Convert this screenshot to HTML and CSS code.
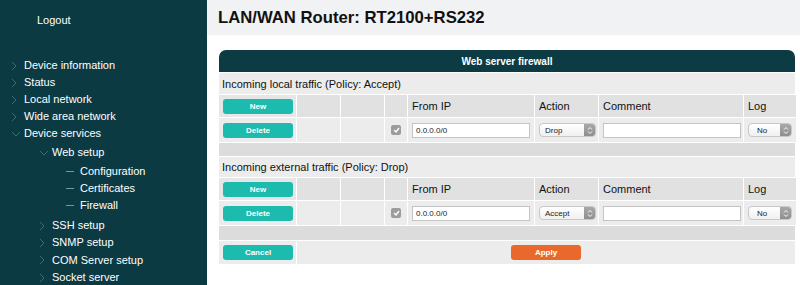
FILE: index.html
```html
<!DOCTYPE html>
<html>
<head>
<meta charset="utf-8">
<link rel="stylesheet" href="styles.css">
</head>
<body>
<div class="page">
  <aside class="sidebar">
    <div class="logout">Logout</div>
    <ul class="menu">
      <li class="item"><span class="chev"><svg width="6" height="10" viewBox="0 0 6 10"><polyline points="1,1 5,5 1,9" fill="none" stroke="#3d6c75" stroke-width="1"/></svg></span>Device information</li>
      <li class="item"><span class="chev"><svg width="6" height="10" viewBox="0 0 6 10"><polyline points="1,1 5,5 1,9" fill="none" stroke="#3d6c75" stroke-width="1"/></svg></span>Status</li>
      <li class="item"><span class="chev"><svg width="6" height="10" viewBox="0 0 6 10"><polyline points="1,1 5,5 1,9" fill="none" stroke="#3d6c75" stroke-width="1"/></svg></span>Local network</li>
      <li class="item"><span class="chev"><svg width="6" height="10" viewBox="0 0 6 10"><polyline points="1,1 5,5 1,9" fill="none" stroke="#3d6c75" stroke-width="1"/></svg></span>Wide area network</li>
      <li class="item"><span class="chev"><svg width="10" height="6" viewBox="0 0 10 6"><polyline points="1,1 5,5 9,1" fill="none" stroke="#3d6c75" stroke-width="1"/></svg></span>Device services</li>
      <li>
        <ul class="sub">
          <li class="item"><span class="chev"><svg width="10" height="6" viewBox="0 0 10 6"><polyline points="1,1 5,5 9,1" fill="none" stroke="#3d6c75" stroke-width="1"/></svg></span>Web setup</li>
          <li>
            <ul class="sub2">
              <li class="item"><span class="dash"></span>Configuration</li>
              <li class="item"><span class="dash"></span>Certificates</li>
              <li class="item"><span class="dash"></span>Firewall</li>
            </ul>
          </li>
          <li class="item"><span class="chev"><svg width="6" height="10" viewBox="0 0 6 10"><polyline points="1,1 5,5 1,9" fill="none" stroke="#3d6c75" stroke-width="1"/></svg></span>SSH setup</li>
          <li class="item"><span class="chev"><svg width="6" height="10" viewBox="0 0 6 10"><polyline points="1,1 5,5 1,9" fill="none" stroke="#3d6c75" stroke-width="1"/></svg></span>SNMP setup</li>
          <li class="item"><span class="chev"><svg width="6" height="10" viewBox="0 0 6 10"><polyline points="1,1 5,5 1,9" fill="none" stroke="#3d6c75" stroke-width="1"/></svg></span>COM Server setup</li>
          <li class="item"><span class="chev"><svg width="6" height="10" viewBox="0 0 6 10"><polyline points="1,1 5,5 1,9" fill="none" stroke="#3d6c75" stroke-width="1"/></svg></span>Socket server</li>
        </ul>
      </li>
    </ul>
  </aside>
  <main class="main">
    <header class="topbar"><h1 class="title">LAN/WAN Router: RT2100+RS232</h1></header>
    <section class="panel">
      <div class="panel-head">Web server firewall</div>
      <div class="rows">
        <div class="row-title first">Incoming local traffic (Policy: Accept)</div>
        <div class="grid head">
          <div class="cell"><button class="btn teal">New</button></div>
          <div class="cell"></div>
          <div class="cell"></div>
          <div class="cell"></div>
          <div class="cell label">From IP</div>
          <div class="cell label">Action</div>
          <div class="cell label">Comment</div>
          <div class="cell label">Log</div>
        </div>
        <div class="grid data">
          <div class="cell"><button class="btn teal">Delete</button></div>
          <div class="cell"></div>
          <div class="cell"></div>
          <div class="cell center"><span class="check"><svg width="7" height="6" viewBox="0 0 7 6"><polyline points="1,3 3,5 6,1" fill="none" stroke="#fff" stroke-width="1.4"/></svg></span></div>
          <div class="cell"><div class="input">0.0.0.0/0</div></div>
          <div class="cell"><div class="select w-action"><span class="sel-text">Drop</span><span class="sel-arrow"><svg width="6" height="9" viewBox="0 0 6 9"><polyline points="1,3.5 3,1.5 5,3.5" fill="none" stroke="#fff" stroke-width="1"/><polyline points="1,5.5 3,7.5 5,5.5" fill="none" stroke="#fff" stroke-width="1"/></svg></span></div></div>
          <div class="cell"><div class="input"></div></div>
          <div class="cell"><div class="select w-log"><span class="sel-text">No</span><span class="sel-arrow"><svg width="6" height="9" viewBox="0 0 6 9"><polyline points="1,3.5 3,1.5 5,3.5" fill="none" stroke="#fff" stroke-width="1"/><polyline points="1,5.5 3,7.5 5,5.5" fill="none" stroke="#fff" stroke-width="1"/></svg></span></div></div>
        </div>
        <div class="spacer"></div>
        <div class="row-title">Incoming external traffic (Policy: Drop)</div>
        <div class="grid head">
          <div class="cell"><button class="btn teal">New</button></div>
          <div class="cell"></div>
          <div class="cell"></div>
          <div class="cell"></div>
          <div class="cell label">From IP</div>
          <div class="cell label">Action</div>
          <div class="cell label">Comment</div>
          <div class="cell label">Log</div>
        </div>
        <div class="grid data">
          <div class="cell"><button class="btn teal">Delete</button></div>
          <div class="cell"></div>
          <div class="cell"></div>
          <div class="cell center"><span class="check"><svg width="7" height="6" viewBox="0 0 7 6"><polyline points="1,3 3,5 6,1" fill="none" stroke="#fff" stroke-width="1.4"/></svg></span></div>
          <div class="cell"><div class="input">0.0.0.0/0</div></div>
          <div class="cell"><div class="select w-action"><span class="sel-text">Accept</span><span class="sel-arrow"><svg width="6" height="9" viewBox="0 0 6 9"><polyline points="1,3.5 3,1.5 5,3.5" fill="none" stroke="#fff" stroke-width="1"/><polyline points="1,5.5 3,7.5 5,5.5" fill="none" stroke="#fff" stroke-width="1"/></svg></span></div></div>
          <div class="cell"><div class="input"></div></div>
          <div class="cell"><div class="select w-log"><span class="sel-text">No</span><span class="sel-arrow"><svg width="6" height="9" viewBox="0 0 6 9"><polyline points="1,3.5 3,1.5 5,3.5" fill="none" stroke="#fff" stroke-width="1"/><polyline points="1,5.5 3,7.5 5,5.5" fill="none" stroke="#fff" stroke-width="1"/></svg></span></div></div>
        </div>
        <div class="spacer tall"></div>
        <div class="actions">
          <div class="cell"><button class="btn teal">Cancel</button></div>
          <div class="cell center"><button class="btn orange">Apply</button></div>
        </div>
      </div>
    </section>
  </main>
</div>
</body>
</html>
```

FILE: styles.css
```css
* { box-sizing: border-box; }
html, body { margin: 0; padding: 0; }
body {
  font-family: "Liberation Sans", Arial, Helvetica, sans-serif;
  background: #fff;
  width: 800px;
  height: 285px;
  overflow: hidden;
}
.page { display: flex; height: 285px; }

.sidebar {
  width: 207px;
  flex: none;
  background: #0c3a43;
  color: #fff;
  font-size: 11px;
  padding-top: 13px;
}
.logout { padding-left: 37px; line-height: 14px; }
.menu, .sub, .sub2 { list-style: none; margin: 0; padding: 0; }
.menu { margin-top: 30px; }
.item {
  display: flex;
  align-items: center;
  line-height: 17px;
  height: 17px;
}
.menu > .item { padding-left: 24px; }
.sub { padding-top: 2px; }
.sub > .item { padding-left: 52px; }
.sub > .item + .item { height: 17.5px; }
.sub2 { padding: 2px 0 3px 0; }
.sub2 > .item { padding-left: 80px; }
.chev {
  width: 12px;
  margin-left: -13px;
  margin-right: 1px;
  display: flex;
  align-items: center;
  justify-content: flex-start;
}
.dash {
  width: 8px;
  height: 1px;
  background: #6f9aa1;
  margin-left: -14px;
  margin-right: 6px;
}

.main { flex: 1; display: flex; flex-direction: column; }
.topbar {
  height: 35px;
  background: #f1f2f4;
  padding-left: 11px;
  display: flex;
  align-items: center;
}
.title {
  margin: 0;
  font-size: 16.7px;
  font-weight: bold;
  color: #111;
}
.panel {
  margin: 15px 0 0 12px;
  width: 576px;
}
.panel-head {
  height: 22px;
  background: #0c3b44;
  border-radius: 7px 7px 0 0;
  color: #fff;
  font-size: 10px;
  font-weight: bold;
  display: flex;
  align-items: center;
  justify-content: center;
}
.rows { display: flex; flex-direction: column; gap: 1px; padding-top: 1px; }
.row-title {
  height: 20px;
  background: #ececec;
  font-size: 11px;
  color: #111;
  display: flex;
  align-items: center;
  padding-left: 3px;
}
.row-title.first { height: 21px; }
.grid {
  display: grid;
  grid-template-columns: 77px 43px 43px 22px 126px 63px 144px 52px;
  column-gap: 1px;
}
.head { height: 22px; }
.data { height: 24px; }
.cell {
  background: #ececec;
  display: flex;
  align-items: center;
  padding-left: 3px;
}
.head .cell { background: #e1e1e1; }
.head .cell:first-child { background: #e6e6e6; }
.data .cell { background: #ececec; }
.label { font-size: 11px; color: #111; padding-left: 4px; }
.center { justify-content: center; padding-left: 0; }
.spacer { height: 13px; background: #dcdcdc; }
.spacer.tall { height: 14px; }
.actions {
  display: grid;
  grid-template-columns: 77px 498px;
  column-gap: 1px;
  height: 23px;
}
.btn {
  border: none;
  font-family: inherit;
  font-size: 8px;
  font-weight: bold;
  color: #fff;
  width: 70px;
  height: 15px;
  border-radius: 3px;
  padding: 0;
  margin-left: 1px;
}
.teal { background: #1dbbad; }
.orange { background: #e8692b; margin-left: 0; }
.check {
  width: 10px;
  height: 10px;
  border-radius: 2px;
  background: #9c9c9c;
  display: flex;
  align-items: center;
  justify-content: center;
}
.input {
  width: 118px;
  height: 15px;
  background: #fff;
  border: 1px solid #c4c4c4;
  font-size: 8px;
  color: #222;
  display: flex;
  align-items: center;
  padding-left: 3px;
  margin-left: 1px;
}
.cell .input:empty { width: 138px; }
.select {
  height: 14px;
  border-radius: 4px;
  border: 1px solid #c8c8c8;
  background: linear-gradient(#ffffff, #f0f0f0);
  display: flex;
  align-items: center;
  justify-content: space-between;
  font-size: 8px;
  color: #222;
  overflow: hidden;
  margin-left: 1px;
}
.w-action { width: 57px; }
.w-log { width: 44px; }
.sel-text { padding-left: 5px; }
.w-log .sel-text { padding-left: 8px; }
.sel-arrow {
  width: 11px;
  height: 100%;
  background: linear-gradient(#a8a8a8, #8e8e8e);
  display: flex;
  align-items: center;
  justify-content: center;
}
```
